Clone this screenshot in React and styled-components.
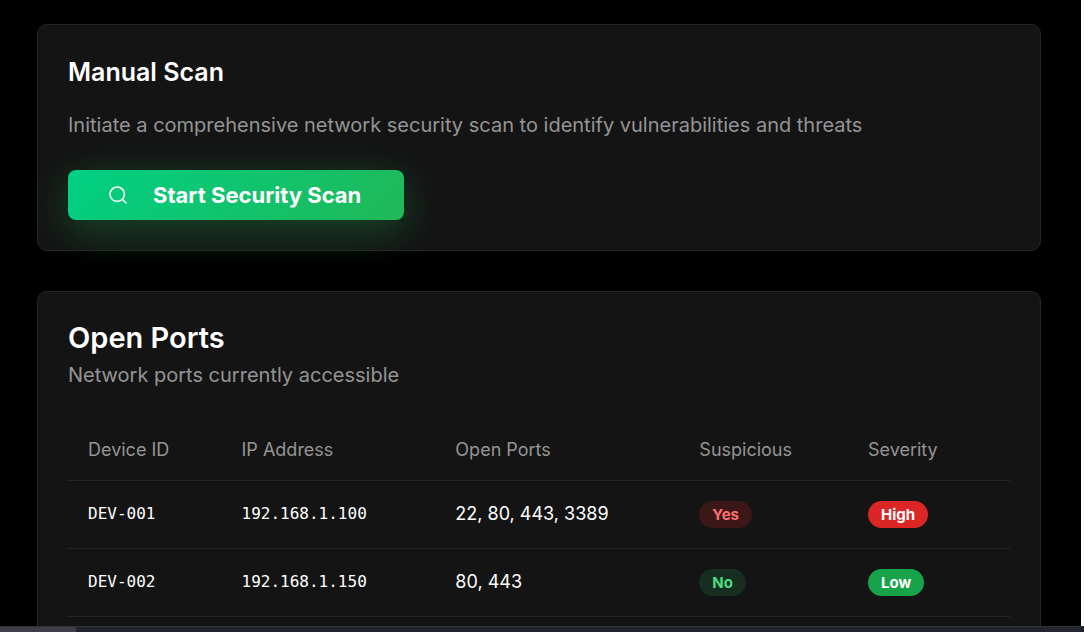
import React from "react";
import styled, { createGlobalStyle } from "styled-components";

const GlobalStyle = createGlobalStyle`
  *, *::before, *::after { box-sizing: border-box; }
  body { margin: 0; background: #fff; font-family: Inter, "Liberation Sans", sans-serif; }
  h2, p { margin: 0; }
`;

const Shell = styled.div`
  display: flex;
  flex-direction: column;
  height: 100vh;
  overflow: hidden;
`;

const Page = styled.main`
  flex: 1;
  min-height: 0;
  margin-right: 3px;
  padding: 24px 40px 0 37px;
  overflow: hidden;
  display: flex;
  flex-direction: column;
  gap: 40px;
  background: #000;
  color: #fff;
`;

const Card = styled.section`
  flex-shrink: 0;
  padding: 30px;
  border: 1px solid #262626;
  border-radius: 10px;
  background: #141414;
`;

const Title = styled.h2`
  font-size: ${(p) => (p.$large ? 29 : 25)}px;
  line-height: ${(p) => (p.$large ? 32 : 35)}px;
  font-weight: 600;
`;

const Description = styled.p`
  margin-top: ${(p) => p.$space}px;
  font-size: 20px;
  line-height: 30px;
  color: #949494;
`;

const ScanButton = styled.button`
  display: flex;
  align-items: center;
  gap: 25px;
  height: 50px;
  margin-top: 30px;
  padding: 0 43px 0 40px;
  border: 0;
  border-radius: 8px;
  background: linear-gradient(135deg, #00d084, #20b858);
  box-shadow: 0 10px 40px rgba(34, 197, 94, 0.3);
  color: #fff;
  font: 700 22px/30px Inter, "Liberation Sans", sans-serif;
  cursor: pointer;
`;

const Table = styled.table`
  width: 100%;
  margin-top: 30px;
  table-layout: fixed;
  border-collapse: collapse;
  text-align: left;
`;

const Column = styled.col`
  width: ${(p) => p.$share}%;
`;

const HeadCell = styled.th`
  height: 60px;
  padding: 0 20px;
  border-bottom: 1px solid #262626;
  font-size: 18px;
  line-height: 24px;
  font-weight: 400;
  color: #949494;
`;

const Cell = styled.td`
  height: 68px;
  padding: 0 20px;
  border-bottom: 1px solid #262626;
  font-family: ${(p) => (p.$mono ? '"DejaVu Sans Mono", monospace' : "inherit")};
  font-size: ${(p) => (p.$mono ? 16 : 18)}px;
  line-height: 24px;
`;

const tones = {
  yes: ["#3b1717", "#f87171"],
  no: ["#162e20", "#4ade80"],
  high: ["#dc2626", "#fff"],
  low: ["#16a34a", "#fff"],
};

const Badge = styled.span`
  display: block;
  width: fit-content;
  padding: 0 13px;
  border-radius: 14px;
  background: ${(p) => tones[p.$tone][0]};
  color: ${(p) => tones[p.$tone][1]};
  font-size: 15px;
  line-height: 27px;
  font-weight: 700;
`;

const ScrollTrack = styled.div`
  flex: none;
  height: 6px;
  border-top: 1px solid #303139;
  background: #22252e;
`;

const ScrollThumb = styled.div`
  width: 7%;
  height: 100%;
  background: #3d3e4a;
`;

const devices = [
  { id: "DEV-001", ip: "192.168.1.100", ports: "22, 80, 443, 3389", suspicious: "Yes", severity: "High" },
  { id: "DEV-002", ip: "192.168.1.150", ports: "80, 443", suspicious: "No", severity: "Low" },
];

const columns = [
  ["Device ID", 16.3],
  ["IP Address", 22.7],
  ["Open Ports", 25.9],
  ["Suspicious", 17.9],
  ["Severity", 17.2],
];

function SearchIcon() {
  return (
    <svg width="20" height="20" viewBox="0 0 20 20" fill="none" stroke="currentColor" strokeWidth="1.6" strokeLinecap="round" strokeLinejoin="round" aria-hidden="true">
      <circle cx="9.2" cy="9.2" r="7.2" />
      <path d="m18 18-3.7-3.7" />
    </svg>
  );
}

export default function App() {
  return (
    <>
      <GlobalStyle />
      <Shell>
        <Page>
          <Card>
            <Title>Manual Scan</Title>
            <Description $space={20}>
              Initiate a comprehensive network security scan to identify vulnerabilities and threats
            </Description>
            <ScanButton type="button">
              <SearchIcon />
              Start Security Scan
            </ScanButton>
          </Card>
          <Card>
            <Title $large>Open Ports</Title>
            <Description $space={6}>Network ports currently accessible</Description>
            <Table>
              <colgroup>
                {columns.map(([name, share]) => (
                  <Column key={name} $share={share} />
                ))}
              </colgroup>
              <thead>
                <tr>
                  {columns.map(([name]) => (
                    <HeadCell key={name} scope="col">{name}</HeadCell>
                  ))}
                </tr>
              </thead>
              <tbody>
                {devices.map((d) => (
                  <tr key={d.id}>
                    <Cell $mono>{d.id}</Cell>
                    <Cell $mono>{d.ip}</Cell>
                    <Cell>{d.ports}</Cell>
                    <Cell><Badge $tone={d.suspicious.toLowerCase()}>{d.suspicious}</Badge></Cell>
                    <Cell><Badge $tone={d.severity.toLowerCase()}>{d.severity}</Badge></Cell>
                  </tr>
                ))}
              </tbody>
            </Table>
          </Card>
        </Page>
        <ScrollTrack>
          <ScrollThumb />
        </ScrollTrack>
      </Shell>
    </>
  );
}
